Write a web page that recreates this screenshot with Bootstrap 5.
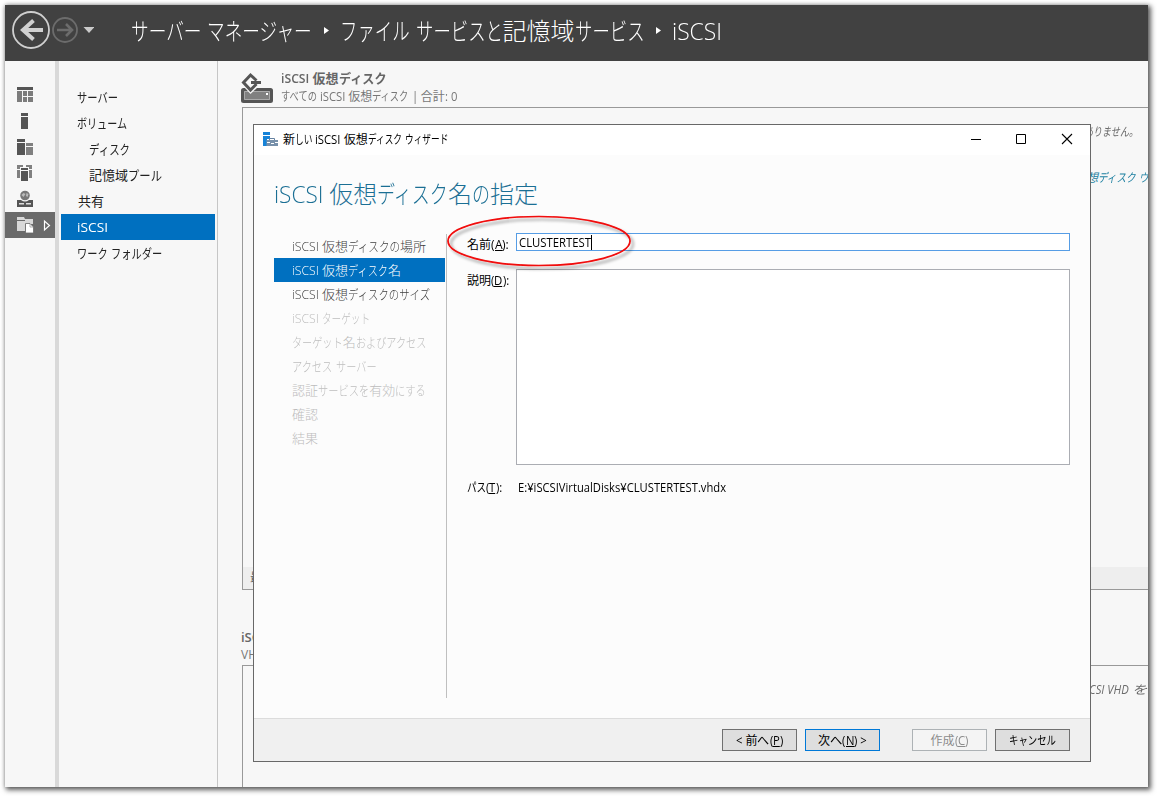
<!DOCTYPE html>
<html lang="ja">
<head>
<meta charset="utf-8">
<title>サーバー マネージャー</title>
<link href="https://cdn.jsdelivr.net/npm/bootstrap@5.3.0/dist/css/bootstrap.min.css" rel="stylesheet">
<style>
body{background:#fff;padding:5px;height:796px;overflow:hidden;font-family:"Open Sans","Noto Sans CJK JP",sans-serif;font-size:12px;line-height:16px;color:#222}
svg{display:block;flex:none}
.fit{white-space:pre;display:block}
.run{display:inline-block;transform-origin:0 50%;white-space:pre}
u,u .run{text-decoration:underline;text-underline-offset:1px;text-decoration-thickness:1px}
.win{width:1143px;height:782px;background:#f7f7f7;box-shadow:0 0 4px 0 rgba(0,0,0,.22),2px 2px 5px 1px rgba(0,0,0,.6)}
.topbar{height:56px;background:#414141;color:#fff;font-size:24px;line-height:30px;font-weight:300;padding-left:7px}
.crumb{height:30px;margin-top:-4px;padding-left:37px}
.crumb svg{margin-top:-1px}
.rail{width:50px;padding-top:25px}
.rail div{height:26px;padding-left:12px}
.rail .on{background:#6a6a6a;margin-top:-4px}
.split{width:4px;background:#d9d9d9}
.side{width:159px;padding:23px 0 0 2px;border-right:1px solid #c6c6c6;font-size:13px}
.side div{height:26px;padding-left:16px;width:154px}
.side .sub2{padding-left:28px}
.side .on,.steps .on{background:#0070c0;color:#fff}
.main-area{padding-left:23px;width:930px;overflow:hidden;color:#6a6a6a}
.tile-h{font-size:13px;font-weight:600;line-height:18px;color:#666}
.tile-s{font-size:12px;line-height:17px;color:#777}
.tile{border:1px solid #999;border-right:0;margin-left:1px}
.dlg{left:253px;top:124px;width:838px;height:638px;background:#fcfcfc;border:1px solid #686868;color:#000}
.cap{height:30px;background:#fff;padding:0 17px 0 9px}
.ttl{font-size:24px;line-height:30px;font-weight:300;color:#1b6f94;padding:24px 0 0 20px;height:79px}
.steps{width:173px;margin-left:20px;height:464px;border-right:1px solid #bfbfbf;color:#3c3c3c;font-size:13px;font-weight:300}
.steps div{height:24px;padding:0 0 1px 18px;width:171px}
.steps .off{color:#bdbdbd}
.lab{width:48px;margin-left:-1px;margin-right:1px}
.inp{width:554px;height:18px;border:1px solid #569de5;background:#fff;padding-left:2px}
.caret{width:1px;height:15px;background:#000}
.area{width:554px;height:196px;border:1px solid #abadb3;background:#fff}
.foot{height:43px;background:#f0f0f0;border-top:1px solid #dcdcdc;padding:10px 20px 0 0;gap:8px}
.wbtn{width:75px;height:22px;border:1px solid #707070;background:#dedede;border-radius:0;padding:1px 0 0;font-size:12px;line-height:16px;color:#000}
.wbtn.def{border-color:#0078d7}
.wbtn:disabled{border-color:#adb2b5;background:#f4f4f4;color:#8c8c8c;opacity:1;margin-left:24px}
.ring{left:440px;top:208px}
</style>
</head>
<body>
<div class="win">
  <header class="topbar d-flex align-items-center">
    <svg width="82" height="40" viewBox="0 0 82 40" style="margin-top:-6px">
      <circle cx="19" cy="20" r="18" fill="none" stroke="#cfcfcf" stroke-width="1.8"/>
      <path d="M31 20H11M21.500 10.500 11 20l10.500 9.500" fill="none" stroke="#d0d0d0" stroke-width="4"/>
      <circle cx="53" cy="20" r="12" fill="none" stroke="#6c6c6c" stroke-width="1.8"/>
      <path d="M45 20h14M54 14l6 6-6 6" fill="none" stroke="#6c6c6c" stroke-width="2.600"/>
      <path d="M71.500 17h11l-5.500 6z" fill="#cacaca"/>
    </svg>
    <div class="crumb d-flex">
      <span class="fit" data-w="181">サーバー マネージャー</span>
      <svg width="28" height="30"><path d="M12 12v7l5-3.500z" fill="#fff"/></svg>
      <span class="fit" data-w="304">ファイル サービスと記憶域サービス</span>
      <svg width="28" height="30"><path d="M12 12v7l5-3.500z" fill="#fff"/></svg>
      <span class="fit" data-w="50">iSCSI</span>
    </div>
  </header>
  <div class="d-flex" style="height:726px">
    <nav class="rail">
      <div><svg width="16" height="17"><path d="M0 1h16v3H0z" fill="#555"/><path d="M0 5h5v11H0zM6 5h4v5H6zM11 5h5v5h-5zM6 11h4v5H6zM11 11h5v5h-5z" fill="#7c7c7c"/></svg></div>
      <div><svg width="16" height="17"><path d="M4 1h7v3H4zM4 5h7v12H4z" fill="#555"/></svg></div>
      <div><svg width="16" height="17"><path d="M0 1h8v3H0zM0 5h8v12H0z" fill="#555"/><path d="M9 5h7v3H9zM9 9h7v8H9z" fill="#808080"/></svg></div>
      <div><svg width="16" height="17"><path d="M0 1h6v2H3v2H0zM9 1h6v4h-3V3H9zM0 6h3v8H0zM12 6h3v8h-3z" fill="#808080"/><path d="M4 4h7v2H4zM4 7h7v10H4z" fill="#555"/></svg></div>
      <div><svg width="16" height="17"><circle cx="8" cy="5.500" r="4.800" fill="#777"/><path d="m4.500 5 2-2 2 1-2 3zM9.500 3l2 1-1 3-1.500-1z" fill="#bbb"/><path d="M0 10h4q4 3 8 0h4v7H0z" fill="#555"/><path d="M2 13h5v1.500H2zM9 13h5v1.500H9z" fill="#ddd"/></svg></div>
      <div class="on"><svg width="36" height="26"><path d="M0 5h7l1 2v1H0zM0 9h8v10H0zM8 7h8v5H8z" fill="#d8d8d8"/><path d="M8.500 11.500h4.500l3.500 3.500v6h-8z" fill="#fff" stroke="#6a6a6a" stroke-width=".8"/><path d="M13 12v3h3" fill="none" stroke="#999" stroke-width=".8"/><path d="M27.500 9v9l5-4.500z" fill="none" stroke="#fff" stroke-width="1.200"/></svg></div>
    </nav>
    <div class="split"></div>
    <nav class="side">
      <div class="d-flex align-items-center"><span class="fit" data-w="41">サーバー</span></div>
      <div class="d-flex align-items-center"><span class="fit" data-w="50">ボリューム</span></div>
      <div class="d-flex align-items-center sub2"><span class="fit" data-w="41">ディスク</span></div>
      <div class="d-flex align-items-center sub2"><span class="fit" data-w="73">記憶域プール</span></div>
      <div class="d-flex align-items-center"><span class="fit" style="padding-left:1px">共有</span></div>
      <div class="d-flex align-items-center on"><span class="fit" data-w="31">iSCSI</span></div>
      <div class="d-flex align-items-center"><span class="fit" data-w="85">ワーク フォルダー</span></div>
    </nav>
    <main class="main-area">
      <div class="d-flex" style="height:46px;padding-top:9px">
        <svg width="32" height="34"><rect x="1.500" y="19.500" width="29" height="12" rx="1" fill="#808080" stroke="#555" stroke-width="3"/><path d="M3.500 21.500h25v8h-25z" fill="none" stroke="#aaa"/><path d="M3 17h14l-7.500 7z" fill="#f7f7f7"/><path d="M15.500 10.500 9.500 5l-7 7.500 7 7.500 6-6M10 12.500h10" fill="none" stroke="#555" stroke-width="3"/><path d="M25 23h2v2h-2z" fill="#fff"/></svg>
        <div style="padding-left:8px;margin-top:-1px"><span class="fit tile-h" data-w="105">iSCSI 仮想ディスク</span><span class="fit tile-s" style="padding-top:1px" data-w="176">すべての iSCSI 仮想ディスク | 合計: 0</span></div>
      </div>
      <section class="tile d-flex flex-column" style="height:483px">
        <div class="flex-grow-1 fst-italic" style="padding:16px 0 0 841px">
          <span class="fit" data-w="54">ありません。</span>
          <span class="fit" data-w="62" style="margin:30px 0 0 2px;color:#1b7fa0">想ディスク ウ</span>
        </div>
        <div style="height:22px;background:#eee;padding:3px 0 0 7px">最</div>
      </section>
      <div style="height:75px;padding-top:38px"><span class="fit tile-h">iSCSI</span><span class="fit tile-s">VHD</span></div>
      <section class="tile fst-italic" style="height:130px;padding:16px 0 0 846px"><span class="fit" data-w="58">CSI VHD を</span></section>
    </main>
  </div>
</div>

<div class="dlg position-absolute">
  <div class="cap d-flex align-items-center">
    <svg width="15" height="16"><path d="M0 0h7v3H0zM0 4h7v3H4v7H0z" fill="#1683d8"/><path d="M3.500 8H15v6H3.500z" fill="#7790aa"/><path d="M6.500 8V6.500h5V8" fill="none" stroke="#6581a0"/><path d="M4 10.500h3M8 11.500h3M12 10.500h3" stroke="#fff"/></svg>
    <span class="fit" data-w="165" style="margin-left:5px">新しい iSCSI 仮想ディスク ウィザード</span>
    <svg class="ms-auto" width="102" height="12" style="margin-top:-2px"><path d="M0 6.500h10M45.500 1.500h9v9h-9z" fill="none" stroke="#000"/><path d="m91 1 10 10M101 1 91 11" stroke="#000" stroke-width="1.100"/></svg>
  </div>
  <div class="ttl"><span class="fit" data-w="264">iSCSI 仮想ディスク名の指定</span></div>
  <div class="d-flex" style="height:484px">
    <div class="steps">
      <div class="d-flex align-items-center"><span class="fit" data-w="134">iSCSI 仮想ディスクの場所</span></div>
      <div class="d-flex align-items-center on"><span class="fit" data-w="109">iSCSI 仮想ディスク名</span></div>
      <div class="d-flex align-items-center"><span class="fit" data-w="138">iSCSI 仮想ディスクのサイズ</span></div>
      <div class="d-flex align-items-center off"><span class="fit" data-w="78">iSCSI ターゲット</span></div>
      <div class="d-flex align-items-center off"><span class="fit" data-w="134">ターゲット名およびアクセス</span></div>
      <div class="d-flex align-items-center off"><span class="fit" data-w="84">アクセス サーバー</span></div>
      <div class="d-flex align-items-center off"><span class="fit" data-w="134">認証サービスを有効にする</span></div>
      <div class="d-flex align-items-center off"><span class="fit">確認</span></div>
      <div class="d-flex align-items-center off"><span class="fit">結果</span></div>
    </div>
    <div style="padding-left:21px">
      <div class="d-flex" style="margin-top:-1px;height:19px"><div class="lab" style="padding-top:4px"><span class="fit" data-w="42">名前(<u>A</u>):</span></div>
        <div class="inp d-flex align-items-center"><span class="fit" data-w="72" style="padding-top:1px">CLUSTERTEST</span><i class="caret"></i></div></div>
      <div class="d-flex" style="margin-top:17px"><div class="lab" style="padding-top:4px"><span class="fit" data-w="42">説明(<u>D</u>):</span></div><div class="area"></div></div>
      <div class="d-flex" style="margin-top:15px"><div class="lab" style="width:50px"><span class="fit" data-w="35">パス(<u>T</u>):</span></div><span class="fit" data-w="208">E:¥iSCSIVirtualDisks¥CLUSTERTEST.vhdx</span></div>
    </div>
  </div>
  <div class="foot d-flex justify-content-end">
    <button class="btn wbtn d-flex justify-content-center align-items-center"><span class="fit" data-w="47">&lt; 前へ(<u>P</u>)</span></button>
    <button class="btn wbtn def d-flex justify-content-center align-items-center"><span class="fit" data-w="49">次へ(<u>N</u>) &gt;</span></button>
    <button class="btn wbtn d-flex justify-content-center align-items-center" disabled><span class="fit" data-w="38">作成(<u>C</u>)</span></button>
    <button class="btn wbtn d-flex justify-content-center align-items-center"><span class="fit" data-w="47">キャンセル</span></button>
  </div>
</div>
<svg class="ring position-absolute" width="200" height="70"><defs><filter id="sh" x="-10%" y="-20%" width="120%" height="150%"><feDropShadow dx="3" dy="3" stdDeviation="1.500" flood-color="#000" flood-opacity=".4"/></filter></defs><ellipse cx="99" cy="33" rx="91" ry="24.500" fill="none" stroke="#f00808" stroke-width="1.700" filter="url(#sh)"/></svg>

<script src="https://cdn.jsdelivr.net/npm/bootstrap@5.3.0/dist/js/bootstrap.bundle.min.js"></script>
<script>
// Condenses kana and Latin runs to UI-font proportions; kanji keep their full width.
const LATIN = 0.94;
function squeeze(run, k) {
  run.style.transform = `scaleX(${k})`;
  run.style.marginRight = `${-(1 - k) * run.offsetWidth}px`;
}
document.querySelectorAll('.fit[data-w]').forEach(el => {
  const walker = document.createTreeWalker(el, NodeFilter.SHOW_TEXT), nodes = [];
  while (walker.nextNode()) nodes.push(walker.currentNode);
  const kana = [], latin = [];
  nodes.forEach(n => {
    const parts = n.data.match(/[\u3001-\u30ff]+|[\u0020-\u00ff]+|[^\u0020-\u00ff\u3001-\u30ff]+/g) || [];
    n.replaceWith(...parts.map(p => {
      const s = document.createElement('span');
      s.textContent = p;
      if (/^[\u3001-\u30ff]/.test(p)) { s.className = 'run'; kana.push(s); }
      else if (/^[\u0020-\u00ff]/.test(p)) { s.className = 'run'; latin.push(s); }
      return s;
    }));
  });
  const sum = a => a.reduce((t, s) => t + s.getBoundingClientRect().width, 0);
  const probe = document.createRange();
  probe.selectNodeContents(el);
  const total = probe.getBoundingClientRect().width, want = +el.dataset.w;
  const lw = sum(latin), kw = sum(kana);
  const rest = total - lw - kw;
  if (kana.length) {
    latin.forEach(s => squeeze(s, LATIN));
    const k = (want - rest - lw * LATIN) / kw;
    kana.forEach(s => squeeze(s, k));
  } else {
    const k = (want - rest) / lw;
    latin.forEach(s => squeeze(s, k));
  }
});
</script>
</body>
</html>
